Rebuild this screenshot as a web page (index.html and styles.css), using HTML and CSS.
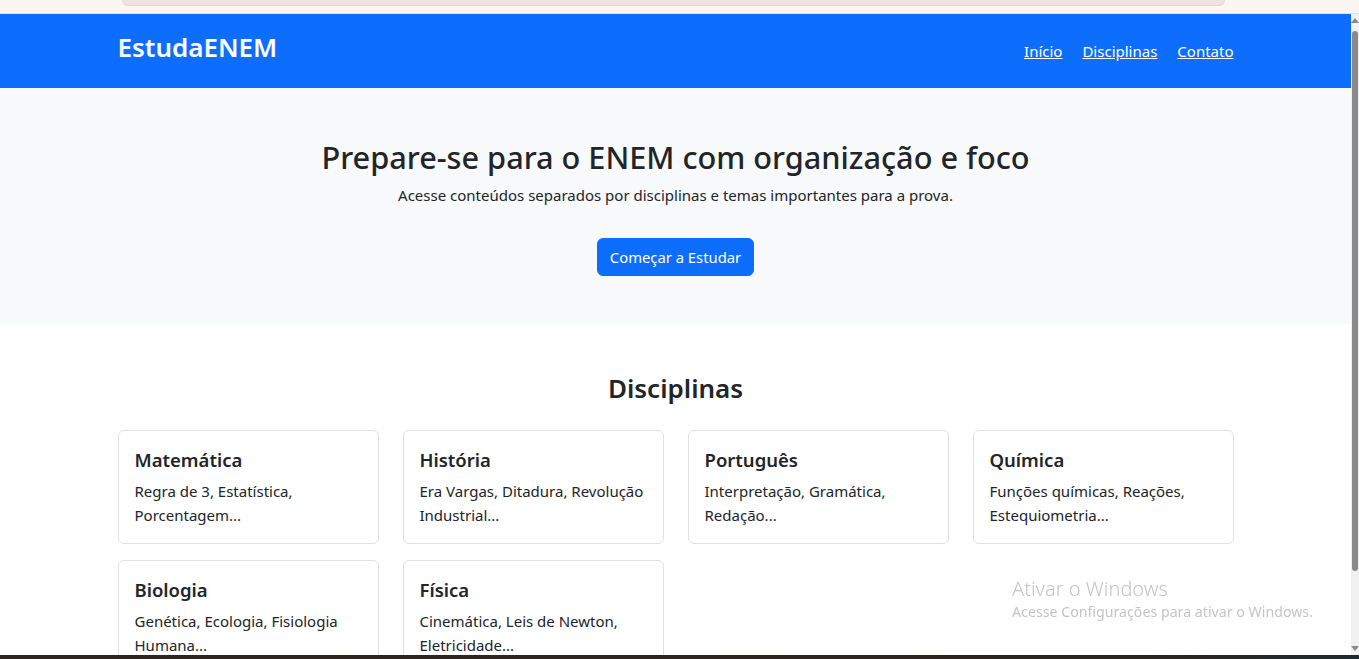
FILE: index.html
```html
<!DOCTYPE html>
<html lang="pt-BR">
<head>
<meta charset="utf-8">
<title>EstudaENEM</title>
<link rel="stylesheet" href="styles.css">
</head>
<body>
<div class="chrome-top"><div class="chrome-pill"></div></div>
<div class="viewport">
  <div class="page">
    <header class="navbar">
      <div class="container nav-inner">
        <h1 class="brand">EstudaENEM</h1>
        <nav class="nav-links">
          <a href="#">Início</a>
          <a href="#">Disciplinas</a>
          <a href="#">Contato</a>
        </nav>
      </div>
    </header>
    <section class="hero">
      <h2 class="hero-title">Prepare-se para o ENEM com organização e foco</h2>
      <p class="hero-text">Acesse conteúdos separados por disciplinas e temas importantes para a prova.</p>
      <div class="hero-action"><a class="btn" href="#">Começar a Estudar</a></div>
    </section>
    <section class="subjects">
      <div class="container">
        <h2 class="section-title">Disciplinas</h2>
        <div class="grid">
          <div class="card"><h5>Matemática</h5><p>Regra de 3, Estatística, Porcentagem...</p></div>
          <div class="card"><h5>História</h5><p>Era Vargas, Ditadura, Revolução Industrial...</p></div>
          <div class="card"><h5>Português</h5><p>Interpretação, Gramática, Redação...</p></div>
          <div class="card"><h5>Química</h5><p>Funções químicas, Reações, Estequiometria...</p></div>
          <div class="card"><h5>Biologia</h5><p>Genética, Ecologia, Fisiologia Humana...</p></div>
          <div class="card"><h5>Física</h5><p>Cinemática, Leis de Newton, Eletricidade...</p></div>
        </div>
      </div>
    </section>
  </div>
  <div class="scrollbar"><div class="arrow-up"></div><div class="thumb"></div><div class="arrow-down"></div></div>
</div>
<div class="taskbar"></div>
<div class="watermark">
  <div class="wm-title">Ativar o Windows</div>
  <div class="wm-sub">Acesse Configurações para ativar o Windows.</div>
</div>
</body>
</html>
```
FILE: styles.css
```css
* { box-sizing: border-box; }
html, body { margin: 0; padding: 0; }
body {
  width: 1359px;
  height: 659px;
  overflow: hidden;
  font-family: "Noto Sans", "Open Sans", sans-serif;
  color: #212529;
  font-size: 16px;
  line-height: 1.5;
  background: #fff;
}
.chrome-top {
  height: 14px;
  background: #fdf5f1;
  border-bottom: 1px solid #f3dcd2;
  padding: 0 134px 0 122px;
}
.chrome-pill {
  height: 6px;
  background: #efe3e0;
  border-radius: 0 0 12px 12px;
  border: 1px solid #e6d6d2;
  border-top: none;
}
.viewport {
  display: flex;
  height: 641px;
}
.page {
  width: 1351px;
  overflow: hidden;
}
.container {
  width: 1140px;
  margin: 0 auto;
  padding: 0 12px;
}
.navbar {
  background: #0d6efd;
  height: 74px;
}
.nav-inner {
  display: flex;
  justify-content: space-between;
  align-items: center;
  height: 100%;
}
.brand {
  margin: 0;
  color: #fff;
  font-size: 26px;
  font-weight: 600;
  line-height: 1.2;
  margin-top: -6px;
}
.nav-links {
  display: flex;
  gap: 20px;
}
.nav-links a {
  color: #fff;
  text-decoration: underline;
  font-size: 15px;
}
.hero {
  background: #f8f9fa;
  padding: 50px 0 48px;
  text-align: center;
}
.hero-title {
  margin: 0 0 7px;
  font-size: 30.7px;
  font-weight: 500;
  line-height: 38.4px;
}
.hero-text {
  margin: 0 0 16px;
  font-size: 15px;
  line-height: 24px;
}
.hero-action {
  padding-top: 15px;
}
.btn {
  display: inline-block;
  background: #0d6efd;
  color: #fff;
  text-decoration: none;
  padding: 6px 12px;
  border: 1px solid #0d6efd;
  border-radius: 6px;
  font-size: 14.8px;
  line-height: 24px;
}
.subjects {
  padding: 48px 0;
}
.section-title {
  margin: 0 0 24px;
  text-align: center;
  font-size: 26px;
  font-weight: 600;
  line-height: 33.6px;
}
.grid {
  display: grid;
  grid-template-columns: repeat(4, 1fr);
  column-gap: 24px;
  row-gap: 16px;
}
.card {
  border: 1px solid #dee2e6;
  border-radius: 6px;
  padding: 16px;
  background: #fff;
}
.card h5 {
  margin: 0 0 7px;
  padding-top: 1px;
  font-size: 18.5px;
  font-weight: 600;
  line-height: 24px;
}
.card p {
  margin: 0;
  font-size: 15px;
  line-height: 24px;
}
.scrollbar {
  width: 8px;
  background: #f1f1f1;
  display: flex;
  flex-direction: column;
  align-items: center;
  padding: 4px 0;
}
.arrow-up {
  width: 0; height: 0;
  border-left: 4px solid transparent;
  border-right: 4px solid transparent;
  border-bottom: 5px solid #8a8a8a;
}
.thumb {
  width: 6px;
  height: 540px;
  margin-top: 8px;
  background: #8a8a8a;
  border-radius: 3px;
}
.arrow-down {
  margin-top: auto;
  width: 0; height: 0;
  border-left: 4px solid transparent;
  border-right: 4px solid transparent;
  border-top: 5px solid #8a8a8a;
}
.taskbar {
  height: 4px;
  background: linear-gradient(90deg, #2d2620 0%, #2b2520 85%, #1f2b2e 100%);
}
.watermark {
  position: fixed;
  left: 1012px;
  top: 577px;
  color: #c4c4c4;
  font-family: "Noto Sans", sans-serif;
  line-height: 1.2;
}
.wm-title {
  font-size: 20px;
  font-weight: 300;
}
.wm-sub {
  font-size: 14.2px;
  margin-top: 2px;
}
```
